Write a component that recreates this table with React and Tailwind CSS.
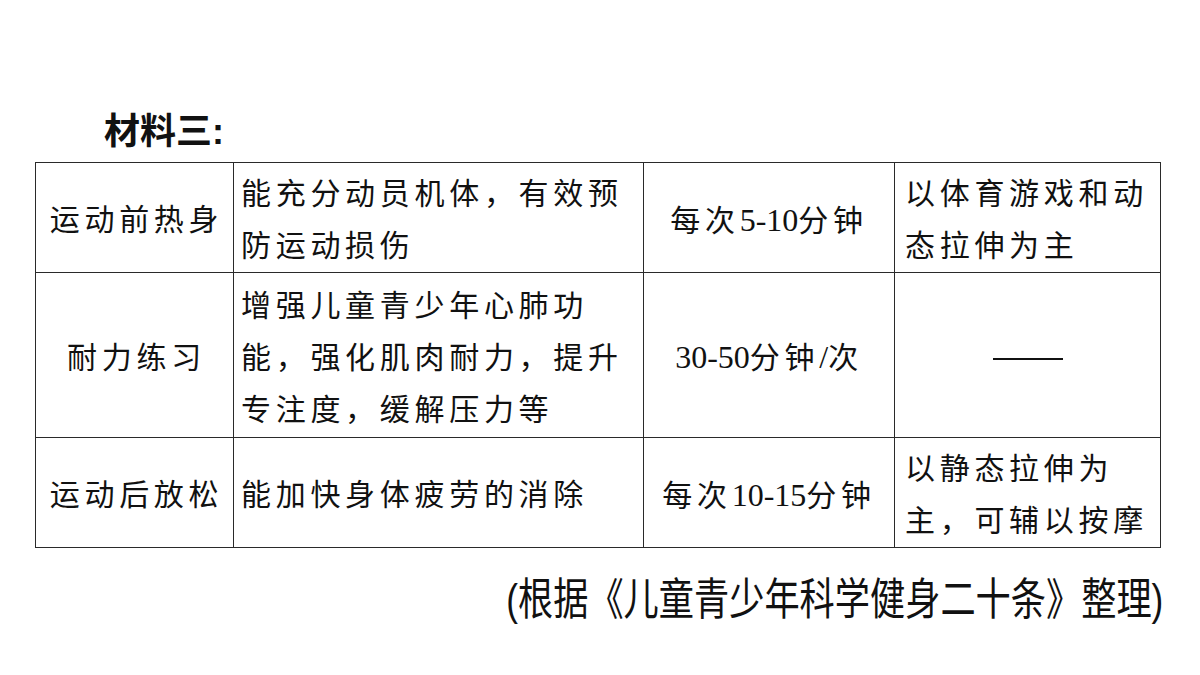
const cjk = '"Liberation Serif", "Noto Sans CJK SC", serif';

const Num = ({ children }) => (
  <span className="tracking-normal text-[32px]" style={{ fontFamily: '"Liberation Serif", serif' }}>
    {children}
  </span>
);

const rows = [
  {
    h: 'h-[110px]',
    name: '运动前热身',
    desc: ['能充分动员机体，有效预', '防运动损伤'],
    time: (
      <>
        每次<Num>5-10</Num>分钟
      </>
    ),
    note: ['以体育游戏和动', '态拉伸为主'],
  },
  {
    h: 'h-[165px]',
    name: '耐力练习',
    desc: ['增强儿童青少年心肺功', '能，强化肌肉耐力，提升', '专注度，缓解压力等'],
    time: (
      <>
        <Num>30-50</Num>分钟<Num>/</Num>次
      </>
    ),
    note: null,
  },
  {
    h: 'h-[110px]',
    name: '运动后放松',
    desc: ['能加快身体疲劳的消除'],
    time: (
      <>
        每次<Num>10-15</Num>分钟
      </>
    ),
    note: ['以静态拉伸为', '主，可辅以按摩'],
  },
];

const cell = 'border border-[#2a2a2a] pt-[5px] pb-0 align-middle';

export default function App() {
  return (
    <div className="w-[1200px] h-[675px] bg-white text-[#111] overflow-hidden">
      <div className="pt-[114px] pl-[35px]">
        {/* Title */}
        <div
          className="ml-[69px] h-[48px] text-[36px] leading-none font-bold"
          style={{ fontFamily: '"Liberation Sans", "Noto Sans CJK SC", sans-serif' }}
        >
          材料三:
        </div>

        {/* Table */}
        <table
          className="border-collapse table-fixed w-[1125px] text-[30px] leading-[52px] tracking-[4.7px]"
          style={{ fontFamily: cjk }}
        >
          <colgroup>
            <col className="w-[198px]" />
            <col className="w-[410px]" />
            <col className="w-[251px]" />
            <col className="w-[266px]" />
          </colgroup>
          <tbody>
            {rows.map((r, i) => (
              <tr key={i} className={r.h}>
                <td className={`${cell} text-center pl-[4px] pr-0`}>{r.name}</td>
                <td className={`${cell} pl-[7px] pr-0`}>
                  {r.desc.map((l, j) => (
                    <div key={j} className="whitespace-nowrap">
                      {l}
                    </div>
                  ))}
                </td>
                <td className={`${cell} text-center whitespace-nowrap`}>{r.time}</td>
                <td className={`${cell} pl-[10px] pr-0`}>
                  {r.note ? (
                    r.note.map((l, j) => (
                      <div key={j} className="whitespace-nowrap">
                        {l}
                      </div>
                    ))
                  ) : (
                    <div className="flex justify-center pr-[10px] pt-[2px]">
                      <div className="w-[70px] h-[2px] bg-[#111]" />
                    </div>
                  )}
                </td>
              </tr>
            ))}
          </tbody>
        </table>

        {/* Source */}
        <div className="flex justify-end w-[1128px] mt-[30px]">
          <div
            className="text-[44px] leading-none whitespace-nowrap scale-x-[0.8] origin-right"
            style={{ fontFamily: '"Liberation Sans", "Noto Sans CJK SC", sans-serif' }}
          >
            (根据《儿童青少年科学健身二十条》整理)
          </div>
        </div>
      </div>
    </div>
  );
}
